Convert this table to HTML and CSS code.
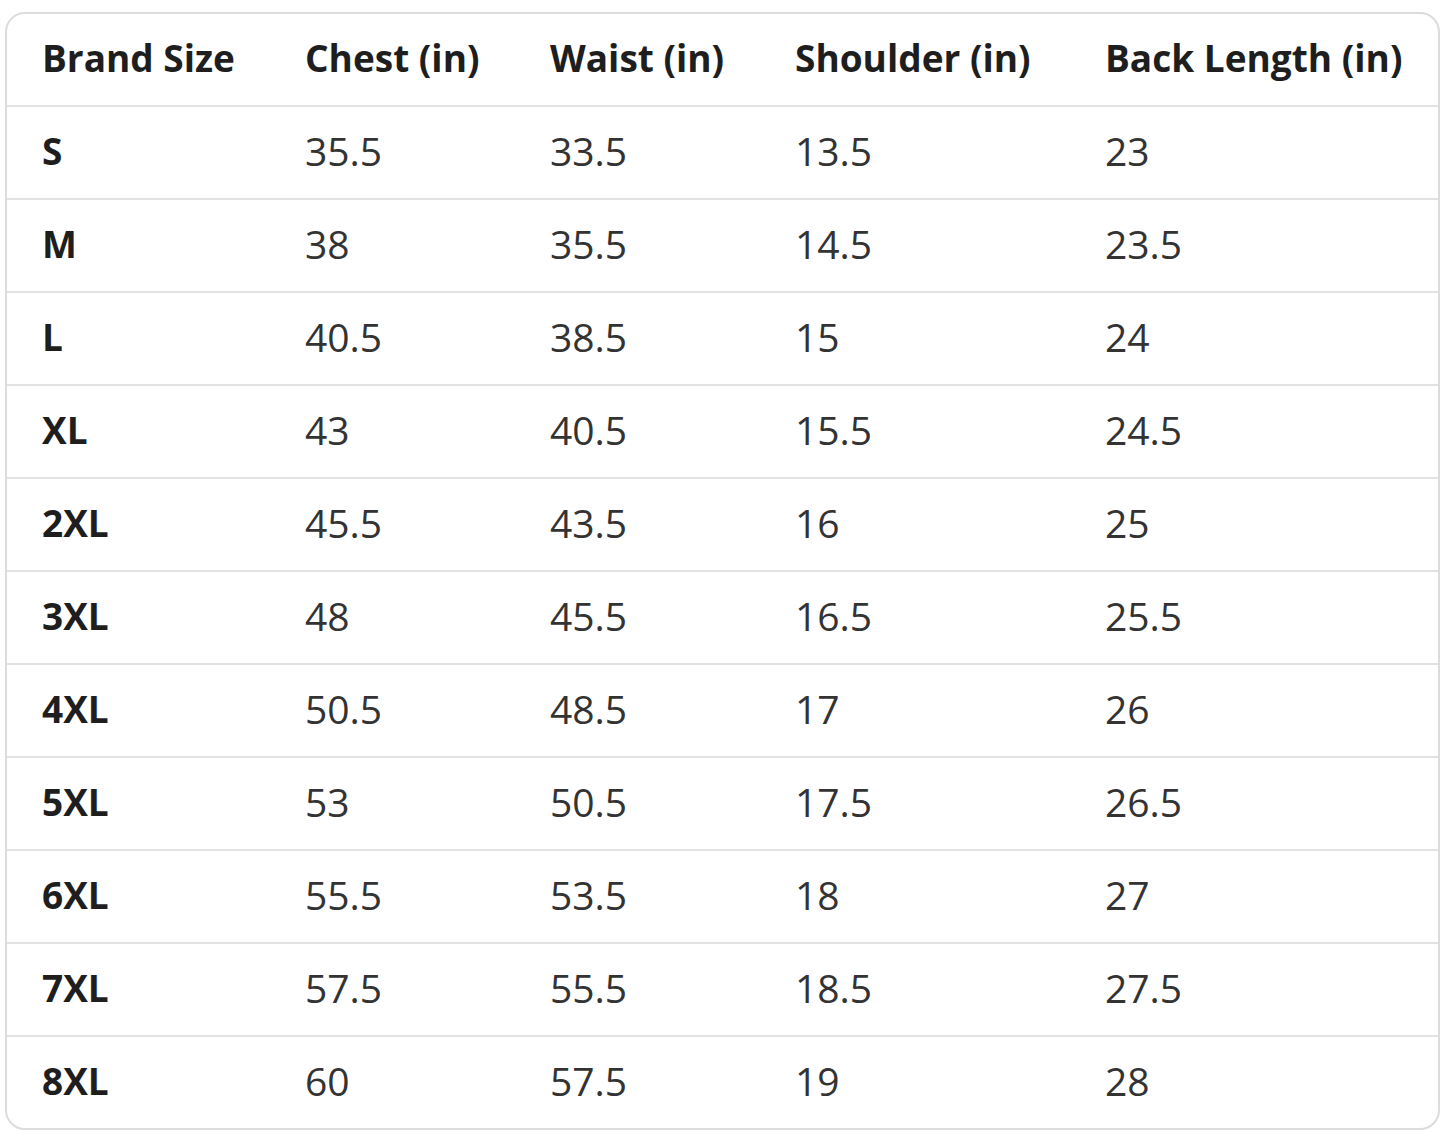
FILE: index.html
```html
<!DOCTYPE html>
<html>
<head>
<meta charset="utf-8">
<link rel="stylesheet" href="styles.css">
</head>
<body>
<div class="card">
  <table class="size-table">
    <colgroup>
      <col class="c1"><col class="c2"><col class="c3"><col class="c4"><col class="c5">
    </colgroup>
    <thead>
      <tr><th>Brand Size</th><th>Chest (in)</th><th>Waist (in)</th><th>Shoulder (in)</th><th>Back Length (in)</th></tr>
    </thead>
    <tbody>
      <tr><th>S</th><td>35.5</td><td>33.5</td><td>13.5</td><td>23</td></tr>
      <tr><th>M</th><td>38</td><td>35.5</td><td>14.5</td><td>23.5</td></tr>
      <tr><th>L</th><td>40.5</td><td>38.5</td><td>15</td><td>24</td></tr>
      <tr><th>XL</th><td>43</td><td>40.5</td><td>15.5</td><td>24.5</td></tr>
      <tr><th>2XL</th><td>45.5</td><td>43.5</td><td>16</td><td>25</td></tr>
      <tr><th>3XL</th><td>48</td><td>45.5</td><td>16.5</td><td>25.5</td></tr>
      <tr><th>4XL</th><td>50.5</td><td>48.5</td><td>17</td><td>26</td></tr>
      <tr><th>5XL</th><td>53</td><td>50.5</td><td>17.5</td><td>26.5</td></tr>
      <tr><th>6XL</th><td>55.5</td><td>53.5</td><td>18</td><td>27</td></tr>
      <tr><th>7XL</th><td>57.5</td><td>55.5</td><td>18.5</td><td>27.5</td></tr>
      <tr><th>8XL</th><td>60</td><td>57.5</td><td>19</td><td>28</td></tr>
    </tbody>
  </table>
</div>
</body>
</html>
```
FILE: styles.css
```css
html, body {
  margin: 0;
  padding: 0;
  background: #ffffff;
}
body {
  padding: 12px 5px 0 5px;
  font-family: "Open Sans", "Noto Sans", sans-serif;
}
.card {
  width: 1435px;
  box-sizing: border-box;
  border: 2px solid #dcdcdc;
  border-radius: 20px;
  overflow: hidden;
}
.size-table {
  width: 100%;
  border-collapse: separate;
  border-spacing: 0;
  table-layout: fixed;
}
.c1 { width: 263px; }
.c2 { width: 245px; }
.c3 { width: 245px; }
.c4 { width: 310px; }
.size-table th,
.size-table td {
  height: 93px;
  box-sizing: border-box;
  padding: 0 0 5px 35px;
  text-align: left;
  vertical-align: middle;
  border-bottom: 2px solid #e2e2e2;
  white-space: nowrap;
}
.size-table tbody tr:last-child th,
.size-table tbody tr:last-child td {
  border-bottom: none;
  height: 91px;
}
.size-table th {
  font-size: 37px;
  font-weight: 700;
  color: #1e1e1e;
}
.size-table td {
  font-size: 39px;
  font-weight: 400;
  color: #333333;
}
```
